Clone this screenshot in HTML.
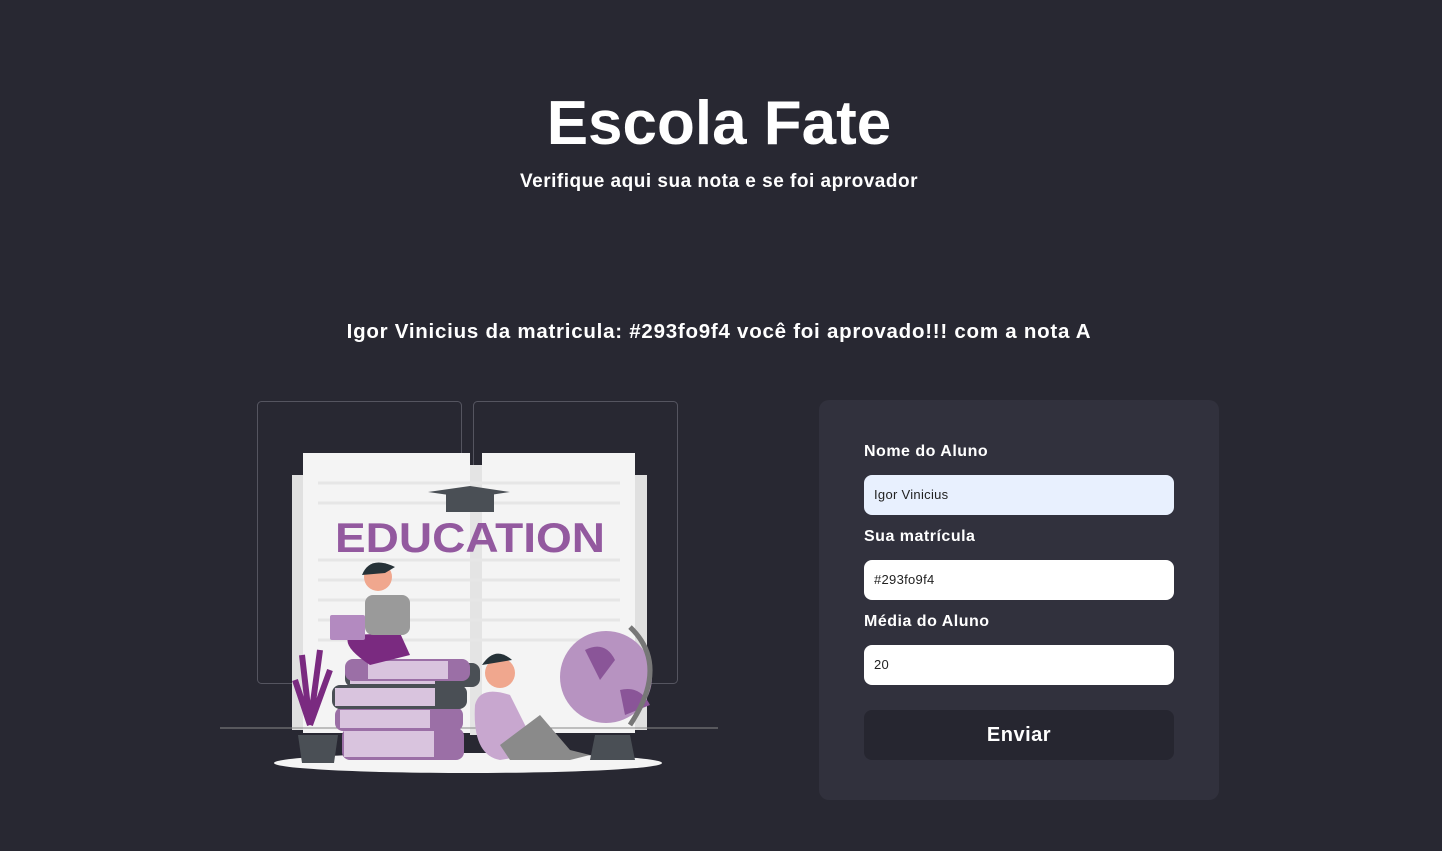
<!DOCTYPE html>
<html><head><meta charset="utf-8"><style>
*{margin:0;padding:0;box-sizing:border-box}
body{width:1442px;height:851px;background:#282832;font-family:"Liberation Sans",sans-serif;color:#fff;position:relative;overflow:hidden}
.a{position:absolute}
h1{position:absolute;left:0;width:1438px;top:88px;text-align:center;font-size:62px;font-weight:bold;letter-spacing:0px}
.sub{top:171px;left:0;width:1438px;text-align:center;font-size:19px;font-weight:bold;letter-spacing:0.5px}
.msg{top:320px;left:0;width:1438px;text-align:center;font-size:20.5px;font-weight:bold;letter-spacing:0.75px}
.panel{left:819px;top:400px;width:400px;height:400px;background:#31313d;border-radius:10px}
.lbl{font-size:16px;font-weight:bold;left:864px;letter-spacing:0.5px}
.inp{left:864px;width:310px;height:40px;border-radius:8px;background:#fff;color:#222;font-size:13px;padding:12px 10px;letter-spacing:0.3px}
.btn{left:864px;top:710px;width:310px;height:50px;border-radius:8px;background:#262630;font-size:20px;font-weight:bold;text-align:center;line-height:50px;letter-spacing:0.5px}
</style></head><body>
<h1>Escola Fate</h1>
<div class="a sub">Verifique aqui sua nota e se foi aprovador</div>
<div class="a msg">Igor Vinicius da matricula: #293fo9f4 você foi aprovado!!! com a nota A</div>

<svg class="a" style="left:210px;top:395px" width="520" height="390" viewBox="0 0 520 390">
<rect x="47.5" y="6.5" width="204" height="282" rx="4" fill="none" stroke="#555560"/>
<rect x="263.5" y="6.5" width="204" height="282" rx="4" fill="none" stroke="#555560"/>
<rect x="82" y="80" width="355" height="255" fill="#e0e0e0"/>
<rect x="93" y="58" width="167" height="280" fill="#f4f4f4"/>
<rect x="260" y="70" width="12" height="270" fill="#e4e4e4"/>
<rect x="272" y="58" width="153" height="280" fill="#f4f4f4"/>
<g stroke="#e6e6e6" stroke-width="3">
<line x1="108" y1="88" x2="410" y2="88"/><line x1="108" y1="108" x2="410" y2="108"/><line x1="108" y1="165" x2="410" y2="165"/><line x1="108" y1="185" x2="410" y2="185"/><line x1="108" y1="205" x2="410" y2="205"/><line x1="108" y1="225" x2="410" y2="225"/><line x1="108" y1="245" x2="410" y2="245"/></g>
<path d="M218 97 L260 91 L300 97 L260 103Z" fill="#4a4f55"/>
<rect x="236" y="97" width="48" height="20" fill="#4a4f55"/>
<text x="260" y="157" text-anchor="middle" font-family="Liberation Sans,sans-serif" font-size="42" font-weight="bold" fill="#93599f" letter-spacing="0" textLength="270" lengthAdjust="spacingAndGlyphs">EDUCATION</text>
<line x1="10" y1="333" x2="508" y2="333" stroke="#888"/>
<ellipse cx="258" cy="368" rx="194" ry="10" fill="#f4f4f4"/>
<g>
<rect x="132" y="333" width="122" height="32" rx="8" fill="#9b6fa6"/><rect x="134" y="336" width="90" height="26" fill="#d9c4de"/>
<rect x="125" y="312" width="128" height="24" rx="8" fill="#9b6fa6"/><rect x="130" y="315" width="90" height="18" fill="#d9c4de"/>
<rect x="122" y="290" width="135" height="24" rx="8" fill="#4a4f55"/><rect x="125" y="293" width="100" height="18" fill="#d9c4de"/>
<rect x="135" y="268" width="135" height="24" rx="8" fill="#4a4f55"/><rect x="140" y="271" width="85" height="18" fill="#d9c4de"/>
<rect x="135" y="264" width="125" height="22" rx="8" fill="#9b6fa6"/><rect x="158" y="266" width="80" height="18" fill="#d9c4de"/>
</g>
<path d="M160 270 Q130 250 140 240 L190 238 L200 260Z" fill="#7a2a80"/>
<rect x="155" y="200" width="45" height="40" rx="8" fill="#9a9a9a"/>
<circle cx="168" cy="182" r="14" fill="#f0a78e"/><path d="M152 180 Q160 160 185 172 L175 178Z" fill="#263238"/>
<rect x="120" y="220" width="35" height="25" rx="2" fill="#b38ac0"/>
<path d="M100 330 L92 260 M100 330 L110 255 M100 330 L120 275 M100 330 L85 285" stroke="#7a2a80" stroke-width="6"/>
<path d="M88 340 L92 368 L124 368 L128 340Z" fill="#4a4f55"/>
<path d="M265 310 Q270 290 300 300 L320 340 L350 355 L290 365 Q262 360 265 310Z" fill="#c8a7cf"/>
<path d="M290 350 L330 320 L360 355 L380 360 L360 365 L300 365Z" fill="#8a8a8a"/>
<circle cx="290" cy="278" r="15" fill="#f0a78e"/><path d="M272 270 Q285 250 302 265Z" fill="#263238"/>
<circle cx="396" cy="282" r="46" fill="#b793c1"/>
<path d="M375 255 Q395 245 405 265 L390 285Z M410 295 Q430 290 440 310 L415 320Z" fill="#8a5598"/>
<path d="M420 232 Q460 270 420 330" fill="none" stroke="#777" stroke-width="5"/>
<path d="M385 340 L420 340 L425 365 L380 365Z" fill="#4a4f55"/>
</svg>

<div class="a panel"></div>
<div class="a lbl" style="top:443px">Nome do Aluno</div>
<div class="a inp" style="top:475px;background:#e8f0fe">Igor Vinicius</div>
<div class="a lbl" style="top:528px">Sua matrícula</div>
<div class="a inp" style="top:560px">#293fo9f4</div>
<div class="a lbl" style="top:613px">Média do Aluno</div>
<div class="a inp" style="top:645px">20</div>
<div class="a btn">Enviar</div>
</body></html>
